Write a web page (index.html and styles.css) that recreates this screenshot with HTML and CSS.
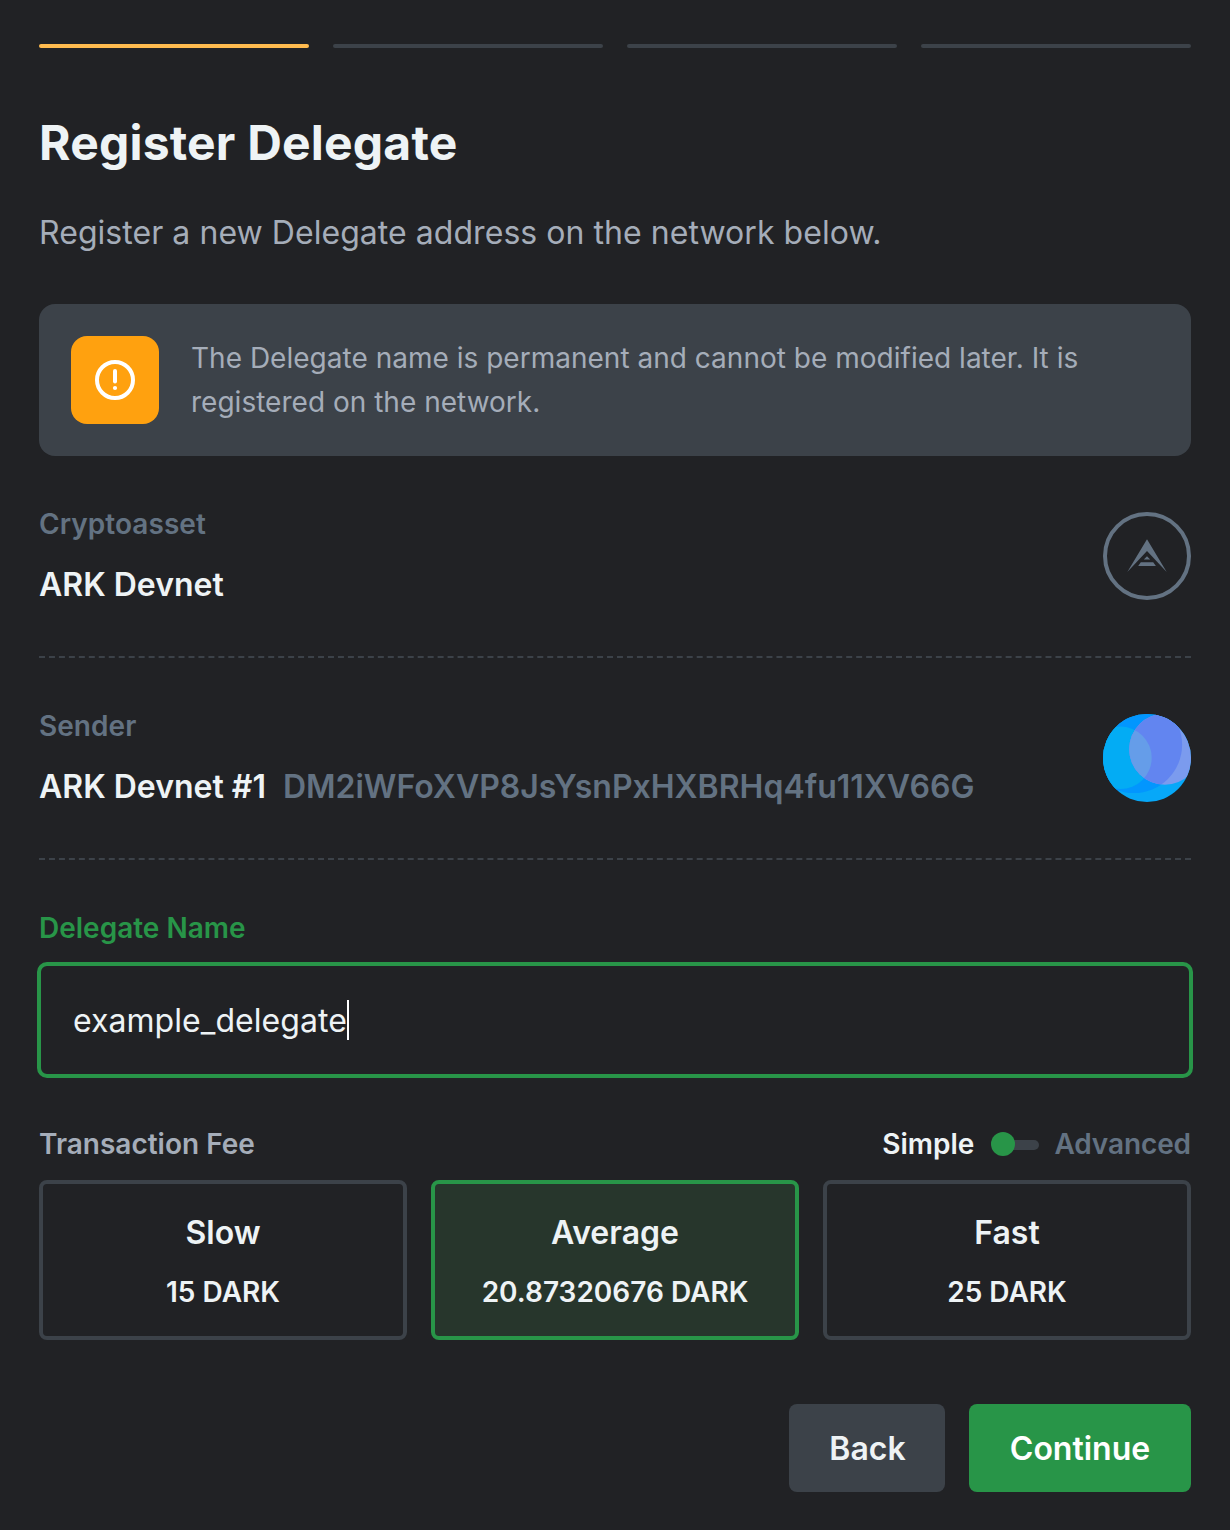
FILE: index.html
```html
<!DOCTYPE html>
<html lang="en">
<head>
<meta charset="utf-8">
<title>Register Delegate</title>
<link rel="stylesheet" href="styles.css">
</head>
<body>
<main class="page">
  <div class="steps">
    <span class="step step-active"></span><span class="step"></span><span class="step"></span><span class="step"></span>
  </div>
  <h1 class="title">Register Delegate</h1>
  <p class="subtitle">Register a new Delegate address on the network below.</p>

  <div class="alert">
    <div class="alert-icon">
      <svg width="40" height="40" viewBox="0 0 40 40" fill="none" stroke="#fff" stroke-width="4" stroke-linecap="round">
        <circle cx="20" cy="20" r="18"/>
        <path d="M20 11v10.5"/>
        <circle cx="20" cy="28" r="2.1" fill="#fff" stroke="none"/>
      </svg>
    </div>
    <p class="alert-text">The Delegate name is permanent and cannot be modified later. It is registered on the network.</p>
  </div>

  <section class="detail">
    <div class="detail-body">
      <div class="label">Cryptoasset</div>
      <div class="value">ARK Devnet</div>
    </div>
    <svg class="avatar" viewBox="0 0 88 88">
      <circle cx="44" cy="44" r="42" fill="none" stroke="#637282" stroke-width="4"/>
      <path fill="#637282" d="M44 27.3 63.7 60 44 39 24.3 60zM44 44.2l3.2 3.3h-6.4zM37.8 50.2h12.4l2.7 3.9H35.2z"/>
    </svg>
  </section>

  <section class="detail">
    <div class="detail-body">
      <div class="label">Sender</div>
      <div class="value">ARK Devnet #1<span class="address">DM2iWFoXVP8JsYsnPxHXBRHq4fu11XV66G</span></div>
    </div>
    <svg class="avatar" viewBox="0 0 88 88">
      <defs>
        <clipPath id="disc"><circle cx="44" cy="44" r="44"/></clipPath>
        <clipPath id="violet"><circle cx="61.8" cy="35.2" r="35.6"/></clipPath>
      </defs>
      <g clip-path="url(#disc)">
        <rect width="88" height="88" fill="#07a8f8"/>
        <circle cx="30.7" cy="30.7" r="48.4" fill="#0296fe"/>
        <circle cx="17.4" cy="43.8" r="31.3" fill="#03acf4"/>
        <circle cx="61.8" cy="35.2" r="35.6" fill="#7b9bee"/>
        <g clip-path="url(#violet)">
          <circle cx="30.7" cy="30.7" r="48.4" fill="#6285f0"/>
          <circle cx="17.4" cy="43.8" r="31.3" fill="#659de9"/>
        </g>
      </g>
    </svg>
  </section>

  <div class="field-label">Delegate Name</div>
  <div class="input">example_delegate<span class="caret"></span></div>

  <div class="fee-head">
    <span class="fee-label">Transaction Fee</span>
    <div class="mode">
      <span class="mode-on">Simple</span>
      <span class="switch"><span class="knob"></span><span class="track"></span></span>
      <span class="mode-off">Advanced</span>
    </div>
  </div>
  <div class="fees">
    <div class="fee"><span class="fee-name">Slow</span><span class="fee-amount">15 DARK</span></div>
    <div class="fee fee-selected"><span class="fee-name">Average</span><span class="fee-amount">20.87320676 DARK</span></div>
    <div class="fee"><span class="fee-name">Fast</span><span class="fee-amount">25 DARK</span></div>
  </div>

  <div class="actions">
    <button class="btn btn-back">Back</button>
    <button class="btn btn-next">Continue</button>
  </div>
</main>
</body>
</html>
```

FILE: styles.css
```css
* { box-sizing: border-box; }
body {
  margin: 0;
  background: #212225;
  color: #eef3f5;
  font-family: Inter, "Liberation Sans", sans-serif;
  font-size: 32px;
}
.page { width: 1230px; height: 1530px; padding: 44px 39px 0; overflow: hidden; }
.steps { display: flex; gap: 24px; }
.step { flex: 1; height: 4px; border-radius: 2px; background: #3c4249; }
.step-active { background: #ffbb4f; }
.title { margin: 65px 0 0; font-size: 48px; line-height: 60px; font-weight: 700; letter-spacing: 0.2px; }
.subtitle { margin: 36px 0 0; line-height: 48px; letter-spacing: 0.05px; color: #a5adb9; }
.alert {
  display: flex; gap: 32px; margin-top: 47px; padding: 32px;
  background: #3c4249; border-radius: 16px;
}
.alert-icon {
  display: flex; align-items: center; justify-content: center;
  flex: none; width: 88px; height: 88px; border-radius: 16px; background: #ffa10f;
}
.alert-text { margin: 0; font-size: 28px; line-height: 44px; letter-spacing: 0.015px; color: #a5adb9; }
.detail {
  display: flex; justify-content: space-between; align-items: flex-start;
  height: 202px; padding-top: 56px;
  border-bottom: 2px dashed #3c4249;
}
.avatar { width: 88px; height: 88px; display: block; }
.label { font-size: 28px; line-height: 24px; font-weight: 600; letter-spacing: 0.05px; color: #637282; }
.value { margin-top: 29px; line-height: 40px; font-weight: 600; white-space: nowrap; }
.address { margin-left: 17px; color: #637282; }
.field-label { margin-top: 48px; font-size: 28px; line-height: 40px; font-weight: 600; color: #289548; }
.input {
  display: flex; align-items: center; height: 116px; margin: 14px -2px 0; padding: 0 32px;
  border: 4px solid #289548; border-radius: 10px; letter-spacing: 0.05px;
}
.caret { width: 2px; height: 40px; background: #fff; }
.fee-head {
  display: flex; justify-content: space-between; margin-top: 46px;
  font-size: 28px; line-height: 40px; font-weight: 600;
}
.fee-label { color: #a5adb9; }
.mode { display: flex; align-items: center; }
.mode-off { margin-left: 15.5px; letter-spacing: -0.1px; color: #637282; }
.switch { display: flex; align-items: center; width: 48px; margin-left: 16.5px; }
.knob { width: 24px; height: 24px; border-radius: 50%; background: #289548; }
.track { flex: 1; height: 10px; margin: 1px 0 0 -4px; border-radius: 0 5px 5px 0; background: #3c4249; position: relative; z-index: -1; }
.fees { display: grid; grid-template-columns: repeat(3, 1fr); gap: 24px; margin-top: 16px; }
.fee {
  display: flex; flex-direction: column; align-items: center; height: 160px; padding-top: 29px;
  border: 4px solid #3c4249; border-radius: 8px; font-weight: 600;
}
.fee-selected { border-color: #289548; background: #27362c; }
.fee-name { line-height: 40px; }
.fee-amount { margin-top: 19px; font-size: 28px; line-height: 40px; }
.actions { display: flex; justify-content: flex-end; gap: 24px; margin-top: 64px; }
.btn {
  height: 88px; padding: 0; border: 0; border-radius: 8px;
  font: 600 32px Inter, "Liberation Sans", sans-serif; color: #eef3f5;
}
.btn-back { width: 156px; padding-left: 1px; background: #3c4249; }
.btn-next { width: 222px; background: #289548; color: #fff; }
```
